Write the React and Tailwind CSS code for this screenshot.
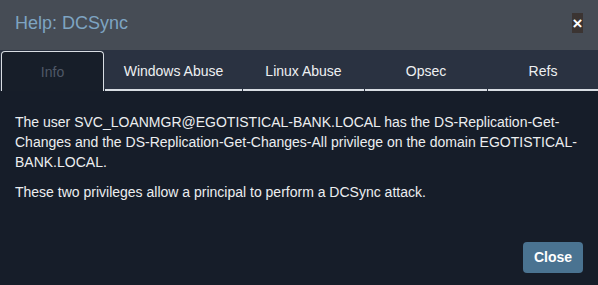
import React from "react";

const tabs = [
  { name: "Info", w: "w-[103px]" },
  { name: "Windows Abuse", w: "w-[137px]" },
  { name: "Linux Abuse", w: "w-[121px]" },
  { name: "Opsec", w: "w-[122px]" },
  { name: "Refs", w: "flex-1" },
];

const HelpModal = () => {
  return (
    <div
      className="w-[598px] h-[285px] bg-[#161d29] flex flex-col overflow-hidden"
      style={{ fontFamily: '"Liberation Sans", Arial, sans-serif' }}
    >
      <div className="h-[50px] bg-[#464c55] flex items-center justify-between pl-[15px] pr-[15px]">
        <h4 className="text-[18px] text-[#7ea4c2] leading-none pb-[4px]">Help: DCSync</h4>
        <button className="w-[11px] h-[20px] bg-[#3b3432] text-white text-[17px] font-bold leading-none flex items-center justify-center mb-[4px]">
          ×
        </button>
      </div>

      <ul className="flex gap-[1px] pl-[1px] bg-[#2a3241] h-[41px]">
        {tabs.map((tab, i) => (
          <li
            key={tab.name}
            className={
              i === 0
                ? `${tab.w} mt-[1px] pt-[2px] border border-b-0 border-[#d8dde3] rounded-t-[4px] bg-[#171e29] text-[#4f5867] flex items-center justify-center text-[14px]`
                : `${tab.w} pt-[3px] border-b-[2px] border-[#d8dde3] text-[#eef0f2] flex items-center justify-center text-[14px]`
            }
          >
            {tab.name}
          </li>
        ))}
      </ul>

      <div className="px-[15px] pt-[21px] text-[14px] leading-[20px] text-[#eceef0] flex-1">
        <p>
          The user SVC_LOANMGR@EGOTISTICAL-BANK.LOCAL has the DS-Replication-Get-Changes and the
          DS-Replication-Get-Changes-All privilege on the domain EGOTISTICAL-BANK.LOCAL.
        </p>
        <p className="mt-[10px]">These two privileges allow a principal to perform a DCSync attack.</p>
      </div>

      <div className="flex justify-end pr-[15px] pb-[12px]">
        <button className="w-[60px] h-[31px] rounded-[4px] bg-[#4a7391] text-white text-[14px] font-semibold">
          Close
        </button>
      </div>
    </div>
  );
};

export default function App() {
  return <HelpModal />;
}
